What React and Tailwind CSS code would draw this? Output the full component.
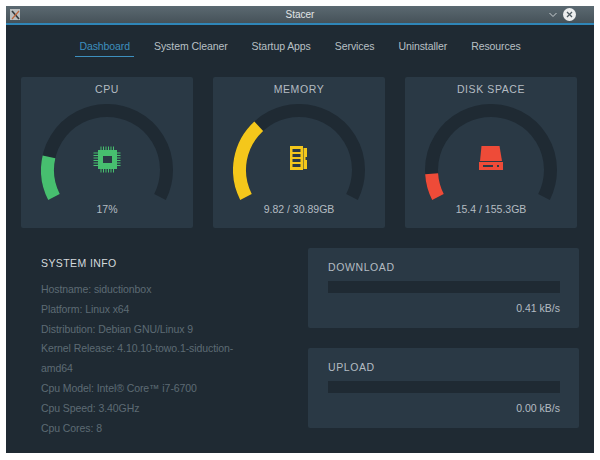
import React from 'react';

const tabs = ['Dashboard', 'System Cleaner', 'Startup Apps', 'Services', 'Uninstaller', 'Resources'];

const info = [
  'Hostname: siductionbox',
  'Platform: Linux x64',
  'Distribution: Debian GNU/Linux 9',
  'Kernel Release: 4.10.10-towo.1-siduction-amd64',
  'Cpu Model: Intel® Core™ i7-6700',
  'Cpu Speed: 3.40GHz',
  'Cpu Cores: 8',
];

// gauge runs from 27deg below horizontal on the left, clockwise over the top
const SWEEP = 234;
const R = 59.5;
const CX = 66;
const CY = 66;

const point = (deg) => {
  const a = (deg * Math.PI) / 180;
  return [CX - R * Math.cos(a), CY - R * Math.sin(a)];
};

const arc = (from, to) => {
  const a = -27 + from * SWEEP;
  const b = -27 + to * SWEEP;
  const [x1, y1] = point(a);
  const [x2, y2] = point(b);
  return `M${x1.toFixed(2)} ${y1.toFixed(2)}A${R} ${R} 0 ${b - a > 180 ? 1 : 0} 1 ${x2.toFixed(2)} ${y2.toFixed(2)}`;
};

const CpuIcon = () => (
  <svg width="28" height="28" viewBox="0 0 28 28" fill="#47bf6f">
    <path fillRule="evenodd" d="M5 4h19v19H5zM10 10v7h9v-7z" />
    {[7.5, 10, 12.5, 15, 17.5, 20].map((p) => (
      <g key={p}>
        <rect x={p} y="0.5" width="1" height="3.5" />
        <rect x={p} y="23" width="1" height="3.5" />
        <rect x="0.5" y={p - 1} width="4.5" height="1" />
        <rect x="24" y={p - 1} width="3.5" height="1" />
      </g>
    ))}
  </svg>
);

const RamIcon = () => (
  <svg width="18" height="24" viewBox="0 0 18 24" fill="#f4c71b">
    <path fillRule="evenodd" d="M0 0h13v24H0zM2.5 3v3h8V3zM2.5 8v3h8V8zM2.5 13v3h8v-3zM2.5 18v3h8v-3z" />
    <path d="M13.5 2H17v9h-1.5v3H17v9h-3.5z" />
  </svg>
);

const DiskIcon = () => (
  <svg width="24" height="24" viewBox="0 0 24 24" fill="#ee4b38">
    <path d="M2.5 0h18L23 15H1z" />
    <path fillRule="evenodd" d="M0 16h24v8H0zM4 19v2h10v-2zM18 19v2h2v-2z" />
  </svg>
);

const Gauge = ({ title, value, percent, color, icon }) => (
  <div className="w-[172px] h-[151px] rounded-[2px] bg-[#2a3945] flex flex-col items-center pt-[5px]">
    <div className="text-[10.5px] leading-[15px] tracking-[0.6px] text-[#b4bcc2]">{title}</div>
    <div className="relative w-[132px] h-[100px] mt-[7px]">
      <svg width="132" height="100" viewBox="0 0 132 100" fill="none" strokeWidth="13">
        <path d={arc(0, 1)} stroke="#1f2a33" />
        <path d={arc(0, percent)} stroke={color} />
      </svg>
      <div className="absolute inset-x-0 top-[42px] flex justify-center">{icon}</div>
    </div>
    <div className="text-[10.5px] leading-[14px] mt-[-2px] text-[#b4bcc2]">{value}</div>
  </div>
);

const Speed = ({ title, value }) => (
  <div className="w-[271px] h-[80px] rounded-[2px] bg-[#2a3945] pl-[20px] pr-[19px] pt-[12px]">
    <div className="text-[10.5px] leading-[14px] tracking-[0.6px] text-[#b4bcc2]">{title}</div>
    <div className="h-[12px] mt-[7px] bg-[#1f2a33]" />
    <div className="text-[10.5px] leading-[14px] mt-[8px] text-right text-[#b4bcc2]">{value}</div>
  </div>
);

export default function App() {
  return (
    <div className="w-[600px] h-[460px] bg-white pt-[6px] pb-[7px] px-[6px] font-[Liberation_Sans,sans-serif]">
      <div className="h-full flex flex-col bg-[#1f2a33]">
        <div className="h-[19px] shrink-0 flex items-center relative border-b-2 border-[#2f86b8] bg-gradient-to-b from-[#5b6971] to-[#465259]">
          <div className="ml-[4px] w-[10px] h-[11px] bg-[#b9bdbe] flex items-center justify-center">
            <svg width="9" height="10" viewBox="0 0 9 10" fill="none">
              <path d="M1 1l7 8" stroke="#33393c" strokeWidth="1.6" />
              <path d="M8 1L1 9" stroke="#c0663c" strokeWidth="1.2" />
            </svg>
          </div>
          <div className="flex-1 pl-[32px] text-center text-[10px] text-[#e2e5e6]">Stacer</div>
          <svg width="10" height="6" viewBox="0 0 10 6" fill="none" className="mr-[5px]">
            <path d="M1.5 1l3.5 3.5L8.5 1" stroke="#c9ced1" strokeWidth="1" />
          </svg>
          <div className="mr-[18px] w-[13px] h-[13px] rounded-full bg-[#eceeef] flex items-center justify-center">
            <svg width="7" height="7" viewBox="0 0 7 7" fill="none">
              <path d="M1 1l5 5M6 1L1 6" stroke="#4d5a61" strokeWidth="1.3" />
            </svg>
          </div>
        </div>

        <div className="flex justify-center gap-[24px] mt-[14px] text-[10.5px] leading-[14px] tracking-[-0.08px] text-[#b8c0c5]">
          {tabs.map((t, i) => (
            <div key={t} className="relative">
              <span className={i === 0 ? 'text-[#3d8fbe]' : ''}>{t}</span>
              {i === 0 && <div className="absolute -left-[4px] -right-[4px] top-[17px] h-[1px] bg-[#3d8fbe]" />}
            </div>
          ))}
        </div>

        <div className="flex gap-[20px] pl-[15px] mt-[24px]">
          <Gauge title="CPU" value="17%" percent={0.17} color="#47bf6f" icon={<CpuIcon />} />
          <Gauge title="MEMORY" value="9.82 / 30.89GB" percent={0.318} color="#f4c71b" icon={<RamIcon />} />
          <Gauge title="DISK SPACE" value="15.4 / 155.3GB" percent={0.1} color="#ee4b38" icon={<DiskIcon />} />
        </div>

        <div className="flex mt-[20px]">
          <div className="w-[302px] pl-[35px] pr-[64px] pt-[7px]">
            <div className="text-[10.5px] leading-[16px] tracking-[0.4px] text-[#d5dadd] mb-[9px]">SYSTEM INFO</div>
            {info.map((line) => (
              <div key={line} className="text-[10.5px] leading-[19.8px] tracking-[-0.08px] text-[#5d6a74]">{line}</div>
            ))}
          </div>
          <div className="flex flex-col gap-[20px]">
            <Speed title="DOWNLOAD" value="0.41 kB/s" />
            <Speed title="UPLOAD" value="0.00 kB/s" />
          </div>
        </div>
      </div>
    </div>
  );
}
